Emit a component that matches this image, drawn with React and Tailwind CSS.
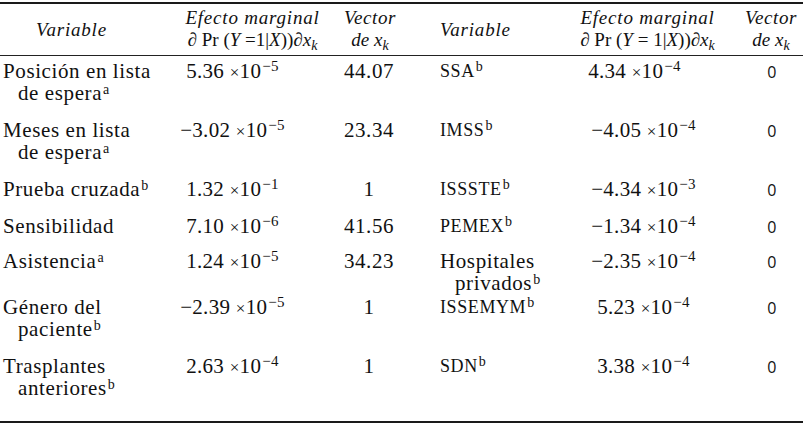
import React from "react";

const rows = [
  { h: "h-[59px]", l: ["Posición en lista", "de espera"], ls: "a", m: "5.36", e: "−5", v: "44.07", r: ["SSA"], rs: "b", rac: true, rm: "4.34", re: "−4", rv: "0", rOff: "pr-[26px]" },
  { h: "h-[59px]", l: ["Meses en lista", "de espera"], ls: "a", m: "−3.02", e: "−5", v: "23.34", r: ["IMSS"], rs: "b", rac: true, rm: "−4.05", re: "−4", rv: "0" },
  { h: "h-[37px]", l: ["Prueba cruzada"], ls: "b", m: "1.32", e: "−1", v: "1", r: ["ISSSTE"], rs: "b", rac: true, rm: "−4.34", re: "−3", rv: "0" },
  { h: "h-[35px]", l: ["Sensibilidad"], ls: "", m: "7.10", e: "−6", v: "41.56", r: ["PEMEX"], rs: "b", rac: true, rm: "−1.34", re: "−4", rv: "0" },
  { h: "h-[46px]", l: ["Asistencia"], ls: "a", m: "1.24", e: "−5", v: "34.23", r: ["Hospitales", "privados"], rs: "b", rac: false, rm: "−2.35", re: "−4", rv: "0" },
  { h: "h-[59px]", l: ["Género del", "paciente"], ls: "b", m: "−2.39", e: "−5", v: "1", r: ["ISSEMYM"], rs: "b", rac: true, rm: "5.23", re: "−4", rv: "0" },
  { h: "h-[70px]", l: ["Trasplantes", "anteriores"], ls: "b", m: "2.63", e: "−4", v: "1", r: ["SDN"], rs: "b", rac: true, rm: "3.38", re: "−4", rv: "0" },
];

const cols = "grid grid-cols-[175px_155px_80px_150px_175px_68px]";

function Sup({ children }) {
  return <span className="relative top-[-6px] text-[14px] leading-none ml-[1px]">{children}</span>;
}

function Exp({ children }) {
  return <span className="relative top-[-7px] text-[15px] leading-none ml-[1px]">{children}</span>;
}

function Name({ lines, sup, acronym }) {
  return (
    <div className={acronym ? "text-[18px] tracking-[0.6px]" : ""}>
      {lines.map((t, i) => (
        <div key={i} className={i > 0 ? "pl-[15px]" : ""}>
          {t}
          {i === lines.length - 1 && sup ? <Sup>{sup}</Sup> : null}
        </div>
      ))}
    </div>
  );
}

function Val({ m, e, off }) {
  return (
    <div className={"flex justify-center " + (off || "")}>
      <span className="whitespace-nowrap tracking-[0.3px]">
        {m} <span className="text-[17px]">×</span>10
        <Exp>{e}</Exp>
      </span>
    </div>
  );
}

function HeadMath({ spaced }) {
  return (
    <div className="whitespace-nowrap">
      <span className="not-italic">∂</span>
      <span className="not-italic"> Pr (</span>
      <span>Y</span>
      <span className="not-italic">{spaced ? " = 1" : " =1"}</span>
      <span className="not-italic">|</span>
      <span>X</span>
      <span className="not-italic">))∂</span>
      <span>x</span>
      <span className="relative top-[4px] text-[14px]">k</span>
    </div>
  );
}

function Header() {
  return (
    <div className={cols + " h-[51px] items-center italic text-[19px] leading-[22px]"}>
      <div className="text-center pr-[32px] tracking-[0.8px]">Variable</div>
      <div className="text-center">
        <div className="tracking-[0.8px]">Efecto marginal</div>
        <HeadMath />
      </div>
      <div className="text-center">
        <div className="tracking-[0.6px]">Vector</div>
        <div>de x<span className="relative top-[4px] text-[14px]">k</span></div>
      </div>
      <div className="pl-[30px] tracking-[0.8px]">Variable</div>
      <div className="text-center">
        <div className="tracking-[0.8px]">Efecto marginal</div>
        <HeadMath spaced />
      </div>
      <div className="text-center pl-[4px]">
        <div className="tracking-[0.6px]">Vector</div>
        <div>de x<span className="relative top-[4px] text-[14px]">k</span></div>
      </div>
    </div>
  );
}

export default function App() {
  return (
    <div className="w-[803px] h-[425px] bg-white text-[#111] font-['Liberation_Serif',serif] overflow-hidden">
      <div className="pt-[2px]">
        <div className="h-[2px] bg-[#1a1a1a]" />
        <Header />
        <div className="h-[1px] bg-[#222]" />
        <div className="text-[21px] leading-[22px] tracking-[0.6px]">
          {rows.map((r, i) => (
            <div key={i} className={cols + " items-start pt-[4px] " + r.h}>
              <div className="pl-[3px]">
                <Name lines={r.l} sup={r.ls} />
              </div>
              <Val m={r.m} e={r.e} off="pr-[40px]" />
              <div className="text-center pr-[2px]">{r.v}</div>
              <div className="pl-[30px]">
                <Name lines={r.r} sup={r.rs} acronym={r.rac} />
              </div>
              <Val m={r.rm} e={r.re} off={r.rOff || "pr-[8px]"} />
              <div className="text-center pl-[6px] font-['Open_Sans',sans-serif] font-normal text-[#111] text-[16px] leading-[24px]">{r.rv}</div>
            </div>
          ))}
        </div>
        <div className="h-[2px] bg-[#1a1a1a]" />
      </div>
    </div>
  );
}
